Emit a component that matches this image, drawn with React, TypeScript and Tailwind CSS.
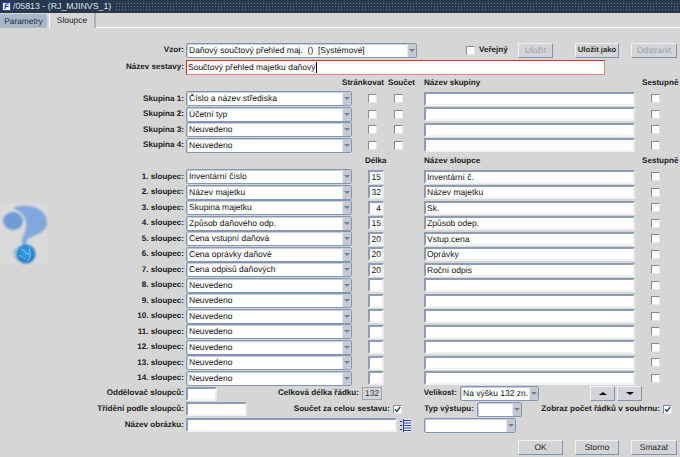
import React from 'react';

const fieldBorder = 'border-2 border-t-[#8d9cb4] border-l-[#8d9cb4] border-r-[#ebebeb] border-b-[#f2f2f2]';

const Label: React.FC<{ w: number; children: React.ReactNode }> = ({ w, children }) => (
  <div
    className="shrink-0 text-right text-[8.1px] font-bold text-[#1c1c1c] whitespace-nowrap"
    style={{ width: w }}
  >
    {children}
  </div>
);

const Select: React.FC<{ w: number; value?: string; cls?: string }> = ({ w, value, cls }) => (
  <div
    className={`shrink-0 h-[15px] flex items-center bg-white border border-[#8496b2] rounded-[2px] shadow-[inset_1px_1px_0_#c4cede] ${cls ?? ''}`}
    style={{ width: w }}
  >
    <span className="flex-1 pl-[2px] text-[8.5px] leading-[13px] text-[#111] whitespace-pre overflow-hidden">{value}</span>
    <span className="w-[9px] h-full shrink-0 bg-[#c6cad0] border-l border-[#e4e6ea] flex items-center justify-center">
      <span className="w-0 h-0 border-x-[3px] border-x-transparent border-t-[3px] border-t-[#6f8099]" />
    </span>
  </div>
);

const Input: React.FC<{ w: number; value?: string; right?: boolean; cls?: string }> = ({ w, value, right, cls }) => (
  <div
    className={`shrink-0 h-[14px] flex items-center bg-white px-[1px] text-[8.5px] leading-[10px] text-[#111] whitespace-pre overflow-hidden ${fieldBorder} ${right ? 'justify-end' : ''} ${cls ?? ''}`}
    style={{ width: w }}
  >
    {value}
  </div>
);

const Check: React.FC<{ checked?: boolean }> = ({ checked }) => (
  <span className="shrink-0 w-[9px] h-[9px] bg-white border border-t-[#7d8ca3] border-l-[#7d8ca3] border-r-[#e6e6e6] border-b-[#e6e6e6] flex items-center justify-center">
    {checked && (
      <svg width="7" height="7" viewBox="0 0 7 7">
        <path d="M1 3.2 L2.8 5.4 L6.2 1" fill="none" stroke="#27364d" strokeWidth="1.3" />
      </svg>
    )}
  </span>
);

const Cell: React.FC<{ w: number; children?: React.ReactNode }> = ({ w, children }) => (
  <div className="shrink-0 flex items-center justify-center" style={{ width: w }}>
    {children}
  </div>
);

const Button: React.FC<{ w: number; disabled?: boolean; strong?: boolean; children: React.ReactNode }> = ({ w, disabled, strong, children }) => (
  <div
    className={`shrink-0 h-[15px] flex items-center justify-center bg-[#d2d4d8] border border-t-[#eef0f2] border-l-[#eef0f2] border-r-[#8494ac] border-b-[#8494ac] leading-none ${strong ? 'text-[7.7px] font-bold' : 'text-[8.4px]'} ${disabled ? 'text-[#9aa0a8]' : 'text-[#2a2a2a]'}`}
    style={{ width: w }}
  >
    {children}
  </div>
);

const groups = ['Číslo a název střediska', 'Účetní typ', 'Neuvedeno', 'Neuvedeno'];

const columns = [
  ['Inventární číslo', '15', 'Inventární č.'],
  ['Název majetku', '32', 'Název majetku'],
  ['Skupina majetku', '4', 'Sk.'],
  ['Způsob daňového odp.', '15', 'Způsob odep.'],
  ['Cena vstupní daňová', '20', 'Vstup.cena'],
  ['Cena oprávky daňové', '20', 'Oprávky'],
  ['Cena odpisů daňových', '20', 'Roční odpis'],
  ['Neuvedeno', '', ''],
  ['Neuvedeno', '', ''],
  ['Neuvedeno', '', ''],
  ['Neuvedeno', '', ''],
  ['Neuvedeno', '', ''],
  ['Neuvedeno', '', ''],
  ['Neuvedeno', '', ''],
];

const HelpMark = () => (
  <svg className="absolute left-0 top-[203px]" width="50" height="62" viewBox="0 0 50 62">
    <defs>
      <filter id="soft">
        <feGaussianBlur stdDeviation="0.8" />
      </filter>
      <radialGradient id="globe" cx="0.5" cy="0.45" r="0.6">
        <stop offset="0" stopColor="#3ea6e6" />
        <stop offset="1" stopColor="#1a72c0" />
      </radialGradient>
    </defs>
    <rect x="0" y="0" width="48" height="60" fill="#dadada" filter="url(#soft)" />
    <g filter="url(#soft)">
      <path
        d="M13 5 C25 0 47 3 47 20 C47 30 33 32 27 37 L25 45 L23 45 L22 37 C24 30 27 27 26 19 C25 12 20 8 13 5 Z"
        fill="#80a8dc"
      />
      <ellipse cx="13" cy="18" rx="10" ry="9" fill="#6f9cd6" />
      <ellipse cx="19" cy="51" rx="6" ry="7" fill="#a9c2e2" />
    </g>
    <circle cx="26" cy="51" r="9.5" fill="url(#globe)" filter="url(#soft)" />
    <path d="M21 46 C26 47 24 51 29 51 M30 44 C28 48 33 53 27 58 M19 53 C22 52 23 55 25 56" fill="none" stroke="#7fd0f4" strokeWidth="1" />
  </svg>
);

export default function App() {
  return (
    <div className="relative w-[680px] h-[457px] overflow-hidden bg-[#d6d6d6] font-['Liberation_Sans',Arial,sans-serif] [text-rendering:geometricPrecision]">
      {/* title bar */}
      <div className="h-[13px] flex items-center bg-[#28394f] pl-[2px]">
        <span className="w-[9px] h-[9px] bg-white border border-[#2a3fc0] flex items-center justify-center text-[8px] leading-none font-bold italic text-[#1d30b0]">
          F
        </span>
        <span className="ml-[2px] w-[102px] text-[8.8px] leading-none text-[#dde2ea] whitespace-nowrap">/05813 - (RJ_MJINVS_1)</span>
        <div className="flex-1 h-[9px] bg-[radial-gradient(circle,#66768c_0.8px,transparent_0.9px)] bg-[length:3px_3px]" />
      </div>

      {/* tabs */}
      <div className="h-[15px] flex items-end">
        <div className="w-[47px] h-[14px] flex items-center justify-center bg-[#a9b7ca] text-[8.4px] leading-none text-[#25303f]">Parametry</div>
        <div className="ml-[2px] w-[47px] h-[15px] flex items-center justify-center bg-[#d6d6d6] border-l border-white border-r-2 border-r-[#a9b3c2] text-[8.4px] leading-none text-[#222]">Sloupce</div>
        <div className="flex-1 h-[1px] bg-white" />
      </div>

      {/* template */}
      <div className="mt-[14px] h-[16px] flex items-center">
        <Label w={184}>Vzor:</Label>
        <Select w={231} value="Daňový součtový přehled maj.  ()  [Systémové]" cls="ml-[2px]" />
        <div className="ml-[49px] w-[52px] flex items-center gap-[4px]">
          <Check />
          <span className="text-[8.1px] font-bold text-[#1c1c1c] leading-none">Veřejný</span>
        </div>
        <Button w={35} disabled>Uložit</Button>
        <div className="w-[22px]" />
        <Button w={44} strong>Uložit jako</Button>
        <div className="w-[12px]" />
        <Button w={46} disabled>Odstranit</Button>
      </div>
      <div className="h-[18px] flex items-center">
        <Label w={184}>Název sestavy:</Label>
        <div className="ml-[2px] w-[419px] h-[15px] flex items-center bg-white border border-t-[#e22a2a] border-l-[#e22a2a] border-r-[#e88484] border-b-[#e88484] pl-[1px] text-[8.5px] leading-[13px] text-[#111]">
          Součtový přehled majetku daňový
          <span className="w-[1px] h-[11px] bg-black" />
        </div>
      </div>

      {/* groups */}
      <div className="h-[15px] flex items-center text-[8.1px] font-bold text-[#1c1c1c] leading-none whitespace-nowrap">
        <div className="ml-[342px] w-[46px]">Stránkovat</div>
        <div className="w-[36px]">Součet</div>
        <div className="w-[218px]">Název skupiny</div>
        <div>Sestupně</div>
      </div>
      {groups.map((g, i) => (
        <div key={i} className="h-[15.5px] flex items-center">
          <Label w={184}>Skupina {i + 1}:</Label>
          <Select w={166} value={g} cls="ml-[2px]" />
          <Cell w={40}><Check /></Cell>
          <Cell w={12}><Check /></Cell>
          <Input w={211} cls="ml-[20px]" />
          <Cell w={40}><Check /></Cell>
        </div>
      ))}

      {/* columns */}
      <div className="h-[16px] flex items-center text-[8.1px] font-bold text-[#1c1c1c] leading-none whitespace-nowrap">
        <div className="ml-[365px] w-[59px]">Délka</div>
        <div className="w-[218px]">Název sloupce</div>
        <div>Sestupně</div>
      </div>
      {columns.map((c, i) => (
        <div key={i} className="h-[15.5px] flex items-center">
          <Label w={184}>{i + 1}. sloupec:</Label>
          <Select w={166} value={c[0]} cls="ml-[2px]" />
          <Input w={16} value={c[1]} right cls="ml-[16px]" />
          <Input w={211} value={c[2]} cls="ml-[40px]" />
          <Cell w={40}><Check /></Cell>
        </div>
      ))}

      {/* bottom fields */}
      <div className="h-[15px] flex items-center">
        <Label w={184}>Oddělovač sloupců:</Label>
        <Input w={31} cls="ml-[2px]" />
        <Label w={142}>Celková délka řádku:</Label>
        <div className="ml-[3px] w-[20px] h-[13px] flex items-center justify-center border border-[#9aa6b8] text-[8.5px] leading-none text-[#333]">132</div>
        <Label w={75}>Velikost:</Label>
        <Select w={79} value="Na výšku 132 zn." cls="ml-[3px]" />
        <div className="w-[51px]" />
        <Button w={25}><span className="w-0 h-0 border-x-[4px] border-x-transparent border-b-[3px] border-b-black" /></Button>
        <div className="w-[2px]" />
        <Button w={25}><span className="w-0 h-0 border-x-[4px] border-x-transparent border-t-[3px] border-t-black" /></Button>
      </div>
      <div className="h-[16px] flex items-center">
        <Label w={184}>Třídění podle sloupců:</Label>
        <Input w={61} cls="ml-[2px]" />
        <Label w={143}>Součet za celou sestavu:</Label>
        <div className="ml-[3px]"><Check checked /></div>
        <Label w={72}>Typ výstupu:</Label>
        <Select w={45} cls="ml-[3px]" />
        <Label w={138}>Zobraz počet řádků v souhrnu:</Label>
        <div className="ml-[3px]"><Check checked /></div>
      </div>
      <div className="h-[16px] flex items-center">
        <Label w={184}>Název obrázku:</Label>
        <Input w={211} cls="ml-[2px]" />
        <svg className="ml-[3px] shrink-0" width="12" height="13" viewBox="0 0 12 13">
          <rect x="3" y="0" width="8" height="13" fill="#f2f4f8" />
          <path d="M0 2.5H2M0 6.5H2M0 10.5H2" stroke="#333" strokeWidth="1" />
          <path d="M3 1.5H11M3 4H11M3 6.5H11M3 9H11M3 11.5H11" stroke="#2340b8" strokeWidth="1" />
          <path d="M3.5 0V13" stroke="#2340b8" strokeWidth="1" />
        </svg>
        <Select w={92} cls="ml-[12px]" />
      </div>

      {/* actions */}
      <div className="mt-[7px] flex">
        <div className="ml-[518px]"><Button w={45}>OK</Button></div>
        <div className="ml-[12px]"><Button w={44}>Storno</Button></div>
        <div className="ml-[12px]"><Button w={46}>Smazat</Button></div>
      </div>

      <HelpMark />
    </div>
  );
}
